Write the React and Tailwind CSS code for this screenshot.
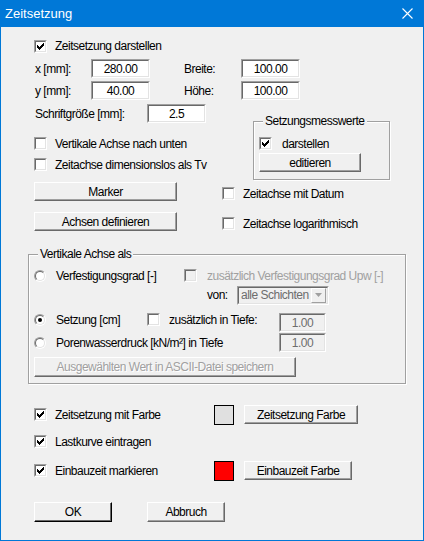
import React from "react";

// Windows-classic Dialog "Zeitsetzung"

const CHECK_COLS = [2, 3, 4, 3, 2, 1, 0]; // oberste Zeile je Spalte, 3px hoch

function CheckMark({ color = "#000" }) {
  return (
    <svg width="7" height="7" viewBox="0 0 7 7" shapeRendering="crispEdges">
      {CHECK_COLS.map((y, x) => (
        <rect key={x} x={x} y={y} width="1" height="3" fill={color} />
      ))}
    </svg>
  );
}

function CheckBox({ checked, disabled }) {
  return (
    <span className="w-[13px] h-[13px] shrink-0 flex border border-t-[#a0a0a0] border-l-[#a0a0a0] border-b-white border-r-white">
      <span
        className={`flex-1 flex items-center justify-center border border-t-[#696969] border-l-[#696969] border-b-[#e3e3e3] border-r-[#e3e3e3] ${
          disabled ? "bg-[#f0f0f0]" : "bg-white"
        }`}
      >
        {checked && <CheckMark />}
      </span>
    </span>
  );
}

function Radio({ checked }) {
  return (
    <span className="w-[12px] h-[12px] shrink-0 flex rounded-full border border-t-[#a0a0a0] border-l-[#a0a0a0] border-b-white border-r-white">
      <span className="flex-1 flex items-center justify-center rounded-full bg-white border border-t-[#696969] border-l-[#696969] border-b-[#e3e3e3] border-r-[#e3e3e3]">
        {checked && <span className="w-[4px] h-[4px] rounded-full bg-black" />}
      </span>
    </span>
  );
}

function CheckRow({ label, checked, disabled, className = "" }) {
  return (
    <div className={`flex items-center h-[13px] gap-[8px] ${className}`}>
      <CheckBox checked={checked} disabled={disabled} />
      <span className={`whitespace-nowrap ${disabled ? "text-[#a0a0a0]" : ""}`}>{label}</span>
    </div>
  );
}

function RadioRow({ label, checked, className = "" }) {
  return (
    <div className={`flex items-center h-[13px] gap-[10px] ${className}`}>
      <Radio checked={checked} />
      <span className="whitespace-nowrap">{label}</span>
    </div>
  );
}

function Btn({ children, className = "", isDefault, disabled }) {
  return (
    <button
      className={`flex items-center justify-center bg-[#f0f0f0] border border-t-white border-l-white ${
        isDefault
          ? "border-b-black border-r-black shadow-[inset_-1px_-1px_0_#696969]"
          : "border-b-[#696969] border-r-[#696969] shadow-[inset_-1px_-1px_0_#a0a0a0]"
      } ${disabled ? "text-[#a0a0a0] [text-shadow:1px_1px_0_#fff]" : "text-black"} ${className}`}
    >
      {children}
    </button>
  );
}

function Field({ value, className = "", disabled }) {
  return (
    <div className={`flex shrink-0 border border-t-[#a0a0a0] border-l-[#a0a0a0] border-b-white border-r-white ${className}`}>
      <div
        className={`flex-1 flex items-center justify-center border border-t-[#696969] border-l-[#696969] border-b-[#e3e3e3] border-r-[#e3e3e3] ${
          disabled ? "bg-[#f0f0f0] text-[#6d6d6d]" : "bg-white"
        }`}
      >
        {value}
      </div>
    </div>
  );
}

function Group({ label, className = "", children }) {
  return (
    <div className={`relative border border-[#a0a0a0] shadow-[1px_1px_0_#fff,inset_1px_1px_0_#fff] ${className}`}>
      <span className="absolute left-[9px] top-[-8px] px-[2px] bg-[#f0f0f0] leading-[15px] whitespace-nowrap">
        {label}
      </span>
      {children}
    </div>
  );
}

export default function App() {
  return (
    <div className="w-[424px] h-[541px] flex flex-col font-['Liberation_Sans',Arial,sans-serif] text-[12px] tracking-[-0.5px] text-black select-none">
      {/* Titelleiste */}
      <div className="h-[27px] shrink-0 bg-[#0078d7] flex items-center justify-between pl-[5px] pr-[11px]">
        <span className="text-white text-[13px] tracking-normal">Zeitsetzung</span>
        <svg width="11" height="11" viewBox="0 0 11 11">
          <path d="M0.5 0.5 L10.5 10.5 M10.5 0.5 L0.5 10.5" stroke="#fff" strokeWidth="1.1" />
        </svg>
      </div>

      {/* Inhalt */}
      <div className="flex-1 bg-[#f0f0f0] border-x border-b border-[#0078d7] flex flex-col">
        <div className="pl-[33px] flex flex-col">
          <div className="mt-[9px] h-[20px] flex items-center">
            <CheckRow label="Zeitsetzung darstellen" checked />
          </div>

          <div className="mt-[3px] h-[19px] flex items-center">
            <span className="w-[57px] pl-[1px]">x [mm]:</span>
            <Field value="280.00" className="w-[59px] h-[19px]" />
            <span className="w-[57px] ml-[34px]">Breite:</span>
            <Field value="100.00" className="w-[59px] h-[19px]" />
          </div>

          <div className="mt-[3px] h-[19px] flex items-center">
            <span className="w-[57px] pl-[1px]">y [mm]:</span>
            <Field value="40.00" className="w-[59px] h-[19px]" />
            <span className="w-[57px] ml-[34px]">Höhe:</span>
            <Field value="100.00" className="w-[59px] h-[19px]" />
          </div>

          <div className="mt-[4px] flex">
            {/* linke Spalte */}
            <div className="w-[188px] flex flex-col">
              <div className="h-[19px] flex items-center">
                <span className="w-[113px] pl-[1px]">Schriftgröße [mm]:</span>
                <Field value="2.5" className="w-[59px] h-[19px]" />
              </div>
              <CheckRow className="mt-[14px]" label="Vertikale Achse nach unten" />
              <CheckRow className="mt-[8px]" label="Zeitachse dimensionslos als Tv" />
              <Btn className="mt-[11px] w-[143px] h-[19px]">Marker</Btn>
              <Btn className="mt-[11px] w-[143px] h-[19px]">Achsen definieren</Btn>
            </div>

            {/* rechte Spalte */}
            <div className="flex flex-col">
              <Group label="Setzungsmesswerte" className="ml-[31px] mt-[17px] w-[137px] h-[59px] pl-[5px] pt-[15px]">
                <CheckRow label="darstellen" checked className="gap-[10px]" />
                <Btn className="mt-[3px] w-[102px] h-[19px]">editieren</Btn>
              </Group>
              <CheckRow className="mt-[7px]" label="Zeitachse mit Datum" />
              <CheckRow className="mt-[17px]" label="Zeitachse logarithmisch" />
            </div>
          </div>
        </div>

        {/* Vertikale Achse als */}
        <Group label="Vertikale Achse als" className="ml-[27px] mt-[23px] w-[378px] h-[130px] pl-[5px] pt-[14px] flex flex-col">
          <div className="h-[13px] flex items-center">
            <RadioRow label="Verfestigungsgrad [-]" className="w-[150px]" />
            <CheckRow label="zusätzlich Verfestigungsgrad Upw [-]" disabled className="gap-[10px]" />
          </div>
          <div className="mt-[4px] h-[18px] flex items-center pl-[173px]">
            <span className="w-[30px]">von:</span>
            <div className="w-[92px] h-[19px] flex border border-t-[#a0a0a0] border-l-[#a0a0a0] border-b-white border-r-white">
              <div className="flex-1 flex items-center border border-t-[#696969] border-l-[#696969] border-b-[#e3e3e3] border-r-[#e3e3e3] bg-[#f0f0f0] pl-[2px] pr-[1px]">
                <span className="flex-1 text-[#6d6d6d] whitespace-nowrap">alle Schichten</span>
                <span className="w-[15px] h-[15px] flex items-center justify-center bg-[#f0f0f0] border border-t-white border-l-white border-b-[#a0a0a0] border-r-[#a0a0a0]">
                  <svg width="7" height="4" viewBox="0 0 7 4">
                    <path d="M0 0 H7 L3.5 4 Z" fill="#a0a0a0" />
                  </svg>
                </span>
              </div>
            </div>
          </div>
          <div className="mt-[9px] h-[19px] flex items-start">
            <RadioRow label="Setzung [cm]" checked className="w-[113px]" />
            <CheckRow label="zusätzlich in Tiefe:" className="w-[132px] gap-[9px]" />
            <Field value="1.00" disabled className="w-[47px] h-[19px]" />
          </div>
          <div className="mt-[1px] h-[19px] flex items-start">
            <RadioRow label="Porenwasserdruck [kN/m²] in Tiefe" className="w-[245px] mt-[3px]" />
            <Field value="1.00" disabled className="w-[47px] h-[19px]" />
          </div>
          <Btn disabled className="mt-[5px] w-[262px] h-[20px]">
            Ausgewählten Wert in ASCII-Datei speichern
          </Btn>
        </Group>

        {/* Farben */}
        <div className="pl-[33px] flex flex-col">
          <div className="mt-[21px] h-[19px] flex items-center">
            <CheckRow label="Zeitsetzung mit Farbe" checked className="w-[180px]" />
            <span className="w-[20px] h-[20px] border border-black bg-[#e0e0e0]" />
            <Btn className="ml-[10px] w-[114px] h-[19px]">Zeitsetzung Farbe</Btn>
          </div>
          <CheckRow className="mt-[11px]" label="Lastkurve eintragen" checked />
          <div className="mt-[13px] h-[19px] flex items-center">
            <CheckRow label="Einbauzeit markieren" checked className="w-[180px]" />
            <span className="w-[20px] h-[20px] border border-black bg-[#ff0000]" />
            <Btn className="ml-[10px] w-[108px] h-[19px]">Einbauzeit Farbe</Btn>
          </div>
          <div className="mt-[22px] flex">
            <Btn isDefault className="w-[78px] h-[20px]">OK</Btn>
            <Btn className="ml-[35px] w-[78px] h-[20px]">Abbruch</Btn>
          </div>
        </div>
      </div>
    </div>
  );
}
